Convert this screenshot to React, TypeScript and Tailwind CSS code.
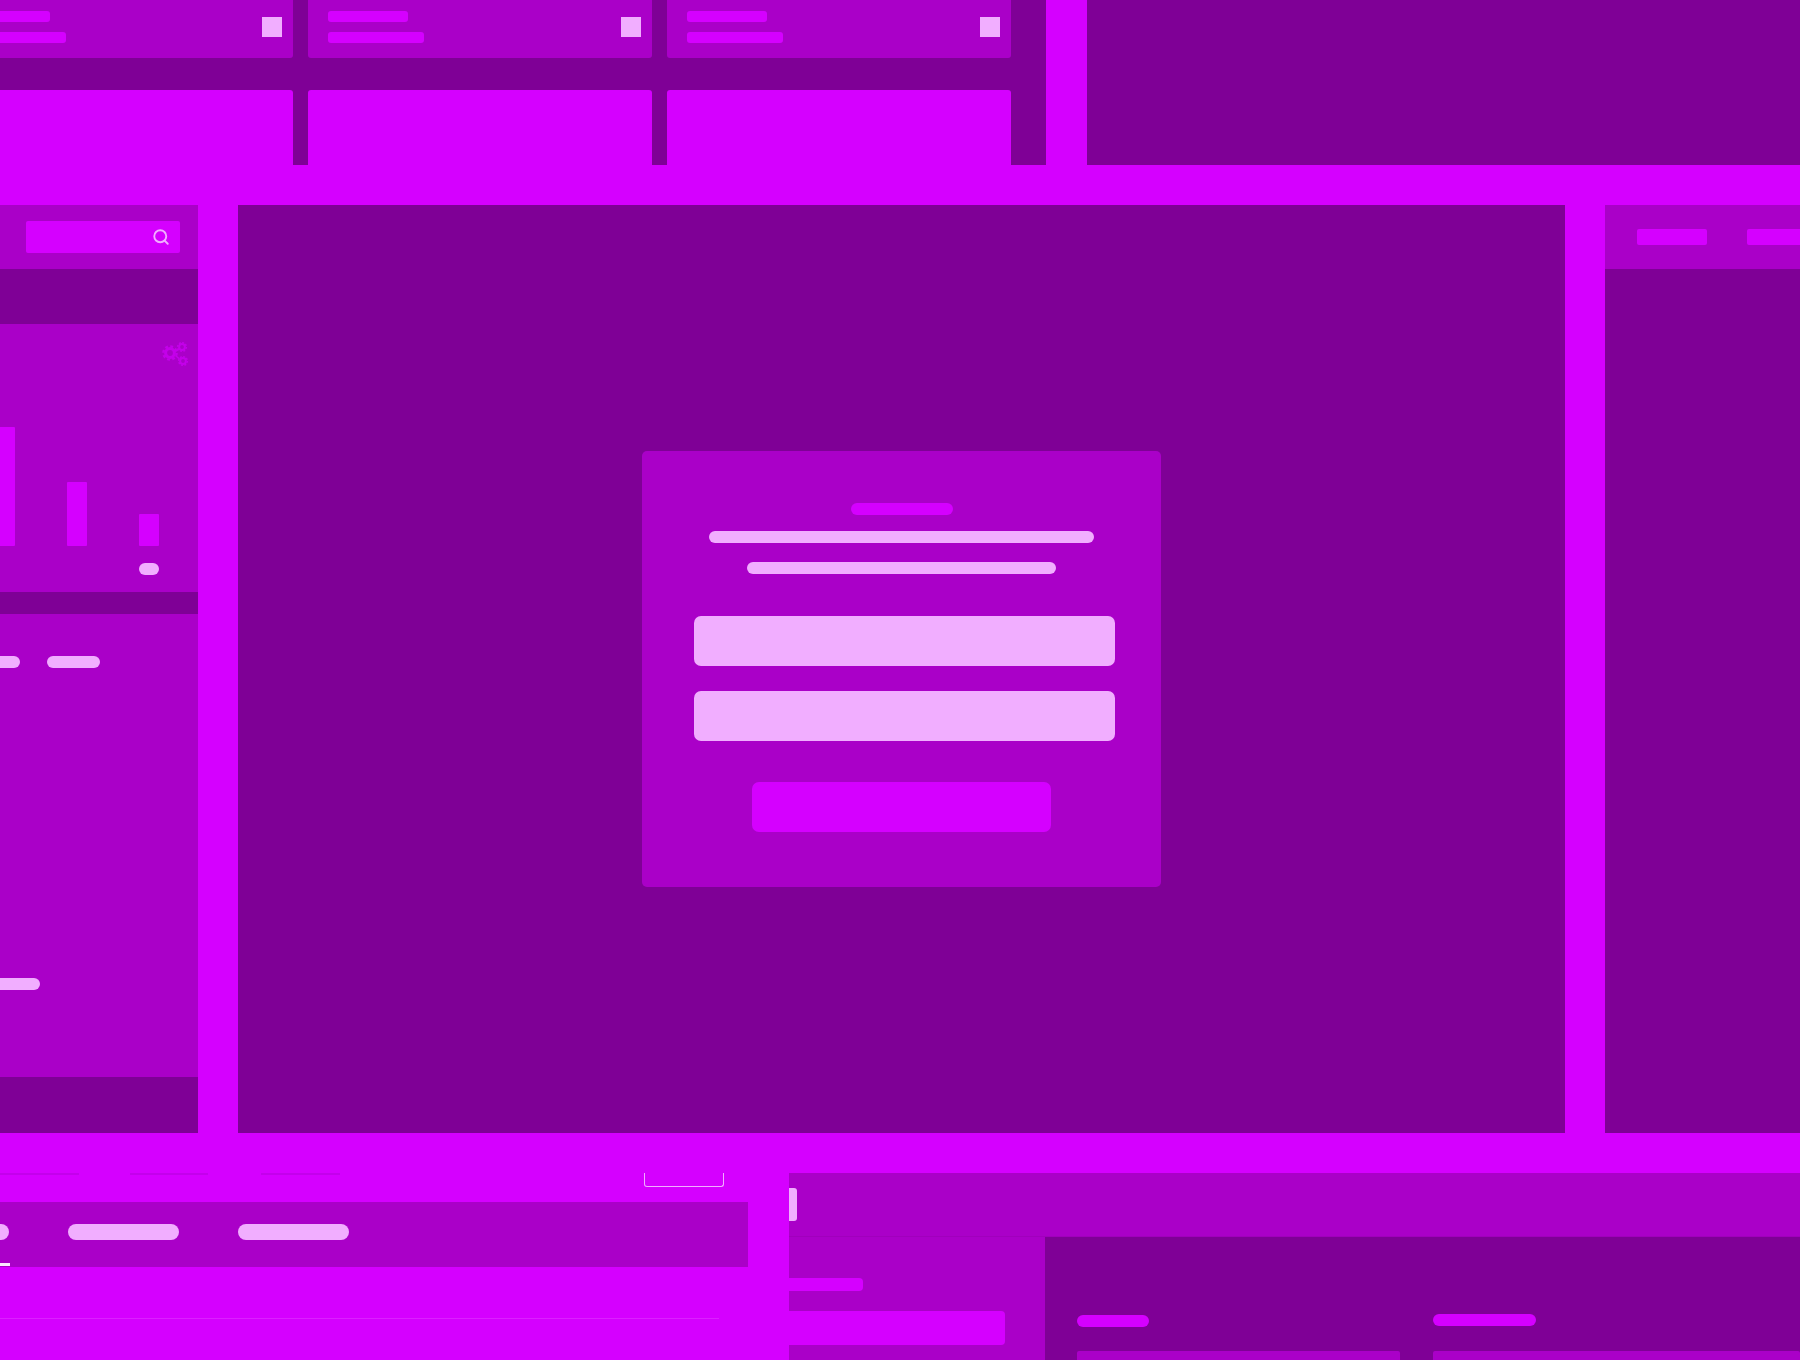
import { Search } from "lucide-react";

// Wireframe crop: every block is a flat placeholder, so only a handful of shades are needed.

function Tile({ first = false }: { first?: boolean }) {
  return (
    <div
      className={`flex h-[58px] shrink-0 items-center justify-between rounded-b-[3px] bg-[#aa00c8] pb-[5px] pl-[20px] pr-[11px] ${
        first ? "w-[343px]" : "w-[344px]"
      }`}
    >
      <div className="flex flex-col gap-[10px]">
        <div className="h-[11px] w-[80px] rounded-[3px] bg-[#d500ff]" />
        <div className="h-[11px] w-[96px] rounded-[3px] bg-[#d500ff]" />
      </div>
      <div className="size-[20px] bg-[#f1aeff]" />
    </div>
  );
}

function TopPanel() {
  return (
    <div className="flex w-[1046px] flex-col gap-[32px] overflow-hidden bg-[#7f0096]">
      <div className="-ml-[50px] flex gap-[15px]">
        <Tile first />
        <Tile />
        <Tile />
      </div>
      <div className="-ml-[50px] flex h-[75px] gap-[15px]">
        <div className="w-[343px] rounded-t-[3px] bg-[#d500ff]" />
        <div className="w-[344px] rounded-t-[3px] bg-[#d500ff]" />
        <div className="w-[344px] rounded-t-[3px] bg-[#d500ff]" />
      </div>
    </div>
  );
}

// Big gear plus two small ones, drawn as rings with dashed teeth
function GearsIcon() {
  return (
    <svg viewBox="0 0 27 24" className="h-[24px] w-[27px]" fill="none" stroke="#c400ea">
      <circle cx="8" cy="11" r="4.4" strokeWidth="3" />
      <circle cx="8" cy="11" r="6.6" strokeWidth="2.4" strokeDasharray="2.8 2.4" />
      <circle cx="20" cy="5" r="2.9" strokeWidth="2" />
      <circle cx="20" cy="5" r="4.4" strokeWidth="1.4" strokeDasharray="1.9 1.5" />
      <circle cx="21" cy="19" r="2.9" strokeWidth="2" />
      <circle cx="21" cy="19" r="4.4" strokeWidth="1.4" strokeDasharray="1.9 1.5" />
      <path d="M13 9.5 17 7M13.5 13.5 17.5 17" strokeWidth="1.6" />
    </svg>
  );
}

function LeftColumn() {
  return (
    <div className="flex w-[198px] flex-col overflow-hidden bg-[#7f0096]">
      <div className="flex h-[64px] items-center bg-[#aa00c8] pl-[26px]">
        <div className="flex h-[32px] w-[154px] items-center justify-end rounded-[2px] bg-[#d500ff] pr-[10px]">
          <Search size={18} strokeWidth={2.5} className="text-[#f1aeff]" />
        </div>
      </div>

      <div className="mt-[55px] flex h-[268px] flex-col bg-[#aa00c8]">
        <div className="flex justify-end pr-[9px] pt-[18px]">
          <GearsIcon />
        </div>
        <div className="-ml-[5px] mt-[61px] flex h-[119px] items-end gap-[52px]">
          <div className="h-[119px] w-[20px] rounded-[1px] bg-[#d500ff]" />
          <div className="h-[64px] w-[20px] rounded-[1px] bg-[#d500ff]" />
          <div className="h-[32px] w-[20px] rounded-[1px] bg-[#d500ff]" />
        </div>
        <div className="ml-[139px] mt-[17px] h-[12px] w-[20px] rounded-full bg-[#f1aeff]" />
      </div>

      <div className="mt-[22px] flex h-[463px] flex-col bg-[#aa00c8] pt-[42px]">
        <div className="-ml-[20px] flex gap-[27px]">
          <div className="h-[12px] w-[40px] rounded-full bg-[#f1aeff]" />
          <div className="h-[12px] w-[53px] rounded-full bg-[#f1aeff]" />
        </div>
        <div className="-ml-[20px] mt-[310px] h-[12px] w-[60px] rounded-full bg-[#f1aeff]" />
      </div>
    </div>
  );
}

function LoginCard() {
  return (
    <div className="flex h-[436px] w-[519px] flex-col items-center rounded-[5px] bg-[#aa00c8] pt-[52px]">
      <div className="h-[12px] w-[102px] rounded-full bg-[#d500ff]" />
      <div className="mt-[16px] h-[12px] w-[385px] rounded-full bg-[#f1aeff]" />
      <div className="mt-[19px] h-[12px] w-[309px] rounded-full bg-[#f1aeff]" />
      <div className="ml-[5px] mt-[42px] h-[50px] w-[421px] rounded-[7px] bg-[#f1aeff]" />
      <div className="ml-[5px] mt-[25px] h-[50px] w-[421px] rounded-[7px] bg-[#f1aeff]" />
      <div className="mt-[41px] h-[50px] w-[299px] rounded-[7px] bg-[#d500ff]" />
    </div>
  );
}

function RightColumn() {
  return (
    <div className="flex-1 overflow-hidden bg-[#7f0096]">
      <div className="flex h-[64px] items-center gap-[40px] bg-[#aa00c8] pl-[32px]">
        <div className="h-[16px] w-[70px] shrink-0 rounded-[2px] bg-[#d500ff]" />
        <div className="h-[16px] w-[70px] shrink-0 rounded-[2px] bg-[#d500ff]" />
      </div>
    </div>
  );
}

function TabsPanel() {
  return (
    <div className="flex w-[748px] flex-col overflow-hidden">
      <div className="flex h-[14px] items-start">
        <div className="h-[2px] w-[79px] bg-[#c400ec]" />
        <div className="ml-[51px] h-[2px] w-[78px] bg-[#c400ec]" />
        <div className="ml-[53px] h-[2px] w-[79px] bg-[#c400ec]" />
        <div className="ml-[304px] h-[14px] w-[80px] rounded-b-[3px] border border-t-0 border-[#f1aeff]" />
      </div>
      <div className="mt-[15px] flex h-[65px] flex-col bg-[#aa00c8] pt-[22px]">
        <div className="-ml-[101px] flex gap-[59px]">
          <div className="h-[16px] w-[110px] shrink-0 rounded-full bg-[#f1aeff]" />
          <div className="h-[16px] w-[111px] shrink-0 rounded-full bg-[#f1aeff]" />
          <div className="h-[16px] w-[111px] shrink-0 rounded-full bg-[#f1aeff]" />
        </div>
        <div className="mt-[23px] h-[3px] w-[10px] bg-[#fbe6ff]" />
      </div>
      <div className="mt-[51px] h-px w-[719px] bg-[#dc20ff]" />
    </div>
  );
}

function SettingsPanel() {
  return (
    <div className="ml-[41px] flex flex-1 flex-col overflow-hidden">
      <div className="flex h-[64px] shrink-0 items-center border-b border-[#a000bc] bg-[#aa00c8]">
        <div className="h-[33px] w-[8px] rounded-r-[3px] bg-[#f1aeff]" />
      </div>
      <div className="flex flex-1">
        <div className="w-[256px] bg-[#aa00c8] pt-[41px]">
          <div className="h-[13px] w-[74px] rounded-r-[4px] bg-[#d500ff]" />
          <div className="mt-[20px] h-[34px] w-[216px] rounded-r-[4px] bg-[#d500ff]" />
        </div>
        <div className="flex flex-1 gap-[33px] bg-[#7f0096] pl-[32px]">
          <div className="w-[323px] pt-[78px]">
            <div className="h-[12px] w-[72px] rounded-full bg-[#d500ff]" />
            <div className="mt-[24px] h-[40px] rounded-t-[2px] bg-[#aa00c8]" />
          </div>
          <div className="flex-1 pt-[77px]">
            <div className="h-[12px] w-[103px] rounded-full bg-[#d500ff]" />
            <div className="mt-[25px] h-[40px] rounded-t-[2px] bg-[#aa00c8]" />
          </div>
        </div>
      </div>
    </div>
  );
}

export default function App() {
  return (
    <div className="flex h-[1360px] w-[1800px] flex-col gap-[40px] overflow-hidden bg-[#d500ff]">
      <div className="flex h-[165px] shrink-0 gap-[41px]">
        <TopPanel />
        <div className="flex-1 bg-[#7f0096]" />
      </div>

      <div className="flex h-[928px] shrink-0 gap-[40px]">
        <LeftColumn />
        <div className="flex w-[1327px] items-center justify-center bg-[#7f0096]">
          <LoginCard />
        </div>
        <RightColumn />
      </div>

      <div className="flex h-[187px] shrink-0">
        <TabsPanel />
        <SettingsPanel />
      </div>
    </div>
  );
}
